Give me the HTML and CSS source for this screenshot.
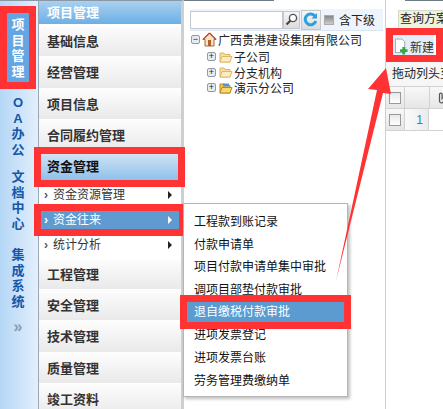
FILE: index.html
```html
<!DOCTYPE html>
<html lang="zh-CN">
  <head>
    <meta charset="UTF-8" />
    <title>项目管理</title>
    <link rel="stylesheet" href="styles.css">
  </head>
  <body>
    <div class="page">
      <!-- module rail -->
      <div class="rail">
        <div class="rail-tab rail-active">项<br>目<br>管<br>理</div>
        <div class="rail-tab rail-oa">O<br>A<br>办<br>公</div>
        <div class="rail-tab rail-doc">文<br>档<br>中<br>心</div>
        <div class="rail-tab rail-sys">集<br>成<br>系<br>统</div>
        <div class="rail-more">»</div>
      </div>

      <!-- accordion menu -->
      <div class="accordion">
        <div class="acc-head">项目管理</div>
        <div class="acc-item">基础信息</div>
        <div class="acc-item">经营管理</div>
        <div class="acc-item">项目信息</div>
        <div class="acc-item">合同履约管理</div>
        <div class="acc-item acc-active">资金管理</div>
        <div class="acc-sub"><span class="sub-mark">›</span>资金资源管理<span class="sub-arrow"></span></div>
        <div class="acc-sub acc-sub-active"><span class="sub-mark">›</span>资金往来<span class="sub-arrow"></span></div>
        <div class="acc-sub"><span class="sub-mark">›</span>统计分析<span class="sub-arrow"></span></div>
        <div class="acc-item">工程管理</div>
        <div class="acc-item">安全管理</div>
        <div class="acc-item">技术管理</div>
        <div class="acc-item">质量管理</div>
        <div class="acc-item">竣工资料</div>
      </div>

      <!-- company tree -->
      <div class="tree-panel">
        <div class="cap cap-tree"></div>
        <div class="search-bar">
          <input class="search-input" type="text" />
          <button class="search-btn">
            <svg width="13" height="13" viewBox="0 0 13 13"><circle cx="8" cy="5" r="3.6" fill="#fff" stroke="#555" stroke-width="1.4"/><path d="M5.5 7.5 1.5 11.5" stroke="#444" stroke-width="2.2"/></svg>
          </button>
          <button class="refresh-btn">
            <svg width="15" height="15" viewBox="0 0 15 15"><path d="M12 4.2A5.4 5.4 0 1 0 12.8 9" fill="none" stroke="#2b9fe0" stroke-width="3"/><path d="M8.5 6.5h5.5V1z" fill="#2b9fe0"/></svg>
          </button>
          <span class="check-box"></span>
          <span class="check-label">含下级</span>
        </div>
        <ul class="tree">
          <li class="tree-root">
            <span class="expander">−</span>
            <svg class="home" width="15" height="15" viewBox="0 0 15 15"><path d="M7.5 1 1 7.5h2V14h9V7.5h2z" fill="#f3e3c8" stroke="#a5683a"/><path d="M7.5 1 1 7.5M7.5 1 14 7.5" stroke="#c0522f" stroke-width="1.4"/><rect x="6" y="8" width="3" height="6" fill="#b5602a"/></svg>
            广西贵港建设集团有限公司
          </li>
          <li class="tree-node"><span class="expander">+</span><svg class="folder" width="14" height="12" viewBox="0 0 14 12"><path d="M1 2h4l1 1.500h5V11H1z" fill="#f6dfa0" stroke="#d9b566"/><path d="M3 5.500h10L11 11H1z" fill="#fcecc0" stroke="#dcb96b"/></svg>子公司</li>
          <li class="tree-node"><span class="expander">+</span><svg class="folder" width="14" height="12" viewBox="0 0 14 12"><path d="M1 2h4l1 1.500h5V11H1z" fill="#f6dfa0" stroke="#d9b566"/><path d="M3 5.500h10L11 11H1z" fill="#fcecc0" stroke="#dcb96b"/></svg>分支机构</li>
          <li class="tree-node"><span class="expander">+</span><svg class="folder" width="14" height="12" viewBox="0 0 14 12"><path d="M1 2h4l1 1.500h5V11H1z" fill="#f2c64e" stroke="#b58a2a"/><path d="M3 5.500h10L11 11H1z" fill="#fbd968" stroke="#b58a2a"/><path d="M4 1.500h6v3H4z" fill="#5a8fd0"/></svg>演示分公司</li>
        </ul>
      </div>

      <!-- grid side -->
      <div class="grid-panel">
        <div class="cap cap-grid"></div>
        <div class="query-tab">查询方案</div>
        <div class="toolbar">
          <button class="new-btn">
            <svg width="15" height="17" viewBox="0 0 15 17"><path d="M1.500.5h7l3 3V15h-10z" fill="#fff" stroke="#9aa6b2"/><path d="M9 9h3v2.500h2.500v3H12V17H9v-2.500H6.500v-3H9z" fill="#2fa845"/></svg>
            新建
          </button>
        </div>
        <div class="group-hint">拖动列头至此处分组</div>
        <div class="grid-row grid-head">
          <span class="cell cell-check"><i class="grid-check"></i></span>
          <span class="cell cell-num"></span>
          <span class="cell cell-clip">
            <svg width="7" height="12" viewBox="0 0 7 12"><path d="M5.500 3v6a2 2 0 0 1-4 0V2.500a1.300 1.300 0 0 1 2.600 0V8" fill="none" stroke="#555" stroke-width="1.200"/></svg>
          </span>
        </div>
        <div class="grid-row">
          <span class="cell cell-check"><i class="grid-check"></i></span>
          <span class="cell cell-num num-val">1</span>
          <span class="cell cell-clip cell-plain"></span>
        </div>
      </div>
    </div>

    <!-- popup submenu -->
    <div class="popup">
      <div class="popup-row">工程款到账记录</div>
      <div class="popup-row">付款申请单</div>
      <div class="popup-row">项目付款申请单集中审批</div>
      <div class="popup-row">调项目部垫付款审批</div>
      <div class="popup-row popup-active">退自缴税付款审批</div>
      <div class="popup-row">进项发票登记</div>
      <div class="popup-row">进项发票台账</div>
      <div class="popup-row">劳务管理费缴纳单</div>
    </div>

    <!-- annotation arrow -->
    <svg class="arrow" width="60" height="220" viewBox="0 0 60 220">
      <path d="M50 0 32 21 41 22 0 213 47 25 55 26z" fill="#f33"/>
    </svg>
  </body>
</html>
```

FILE: styles.css
```css
body {
  margin: 0;
  padding: 0;
  font-family: "Liberation Sans", "Noto Sans CJK SC", sans-serif;
  font-size: 12px;
  color: #222;
  background: #fff;
  width: 443px;
  height: 409px;
  overflow: hidden;
  position: relative;
}
.page {
  display: flex;
  height: 409px;
}

/* module rail */
.rail {
  width: 38px;
  flex: none;
  padding-top: 13px;
  box-sizing: border-box;
  background: linear-gradient(to right, #b4d7f6, #e3effc);
  border-top: 1px solid #8a97a5;
  display: flex;
  flex-direction: column;
  align-items: flex-start;
}
.rail-tab {
  width: 22px;
  margin-left: 7px;
  text-align: center;
  font-weight: bold;
  font-size: 13px;
  line-height: 15.500px;
  color: #1557a8;
}
.rail-active {
  background: #64a6e3;
  color: #fff;
  padding: 4px 0 3px;
  margin-top: -1px;
  outline: 7px solid #f33;
}
.rail-oa {
  margin-top: 13px;
}
.rail-doc {
  margin-top: 12px;
}
.rail-sys {
  margin-top: 16px;
}
.rail-more {
  width: 22px;
  margin: 9px 0 0 7px;
  text-align: center;
  font-size: 16px;
  font-weight: bold;
  color: #8a9aac;
}

/* accordion */
.accordion {
  width: 146px;
  flex: none;
  box-sizing: border-box;
  border-left: 1px solid #9aa7b4;
  border-right: 3px solid #cfcfcf;
  border-top: 1px solid #8a97a5;
  background: #fff;
}
.acc-head {
  height: 23px;
  line-height: 23px;
  padding-left: 8px;
  font-weight: bold;
  font-size: 13px;
  color: #fff;
  background: linear-gradient(to bottom, #a9d0f0, #6cb0e6);
  border-bottom: 1px solid #fff;
}
.acc-item {
  height: 31.400px;
  line-height: 31px;
  box-sizing: border-box;
  padding-left: 8px;
  font-weight: bold;
  font-size: 13px;
  color: #333;
  background: linear-gradient(to bottom, #fdfdfd, #e9e9e9);
  border-top: 1px solid #fff;
}
.acc-active {
  position: relative;
  height: 26px;
  line-height: 26px;
  margin: 3px 3px 3px 2px;
  padding-left: 6px;
  border: 0;
  color: #111;
  background: linear-gradient(to bottom, #cfe3f5, #8fc0ea);
  outline: 7px solid #f33;
}
.acc-sub {
  height: 25px;
  line-height: 24px;
  display: flex;
  align-items: center;
  padding: 0 9px 0 5px;
  color: #333;
  background: #fff;
}
.sub-mark {
  width: 9px;
  color: #555;
  font-weight: bold;
}
.sub-arrow {
  margin-left: auto;
  border-left: 4px solid #222;
  border-top: 4px solid transparent;
  border-bottom: 4px solid transparent;
}
.acc-sub-active {
  position: relative;
  height: 18px;
  margin: 3px 2px 4px 2px;
  padding: 0 7px 0 3px;
  color: #fff;
  background: #5f9bd0;
  outline: 7px solid #f33;
}
.acc-sub-active .sub-mark {
  color: #fff;
}
.acc-sub-active .sub-arrow {
  border-left-color: #fff;
}

/* tree */
.tree-panel {
  width: 201px;
  flex: none;
  box-sizing: border-box;
  padding: 0 2px 0 0;
}
.cap {
  height: 1px;
  background: #6f7c88;
}
.cap-tree {
  width: 90px;
}
.cap-grid {
  margin-left: 19px;
}
.search-bar {
  display: flex;
  align-items: center;
  height: 22px;
  box-sizing: border-box;
  margin: 8px 0 0 6px;
  padding-right: 8px;
  background: #eef4fb;
  border-bottom: 1px solid #dbe6f2;
}
.search-input {
  width: 93px;
  height: 18px;
  box-sizing: border-box;
  border: 1px solid #c4c8cc;
  background: #fff;
  padding: 0;
}
.search-btn,
.refresh-btn {
  padding: 0;
  display: flex;
  align-items: center;
  justify-content: center;
  background: linear-gradient(to bottom, #f6f6f6, #dcdcdc);
  border: 1px solid #c8c8c8;
}
.search-btn {
  width: 17px;
  height: 18px;
}
.refresh-btn {
  width: 21px;
  height: 20px;
  margin-left: 1px;
}
.check-box {
  width: 8px;
  height: 8px;
  margin-left: 3px;
  background: linear-gradient(to bottom, #888, #ccc);
  border: 1px solid #aaa;
}
.check-label {
  margin-left: 5px;
  white-space: nowrap;
}
.tree {
  list-style: none;
  margin: 0;
  padding: 0;
  font-size: 12px;
}
.tree li {
  display: flex;
  align-items: center;
  height: 15.500px;
  white-space: nowrap;
}
.tree li.tree-root {
  padding-left: 7px;
  margin-bottom: 1px;
  height: 17px;
}
.tree-node {
  padding-left: 23px;
}
.expander {
  width: 7px;
  height: 7px;
  flex: none;
  border: 1px solid #8f9ba8;
  border-radius: 2px;
  background: #e6ebf2;
  color: #223;
  font-size: 9px;
  line-height: 6px;
  text-align: center;
  margin-right: 2px;
  box-sizing: content-box;
}
.home {
  margin-right: 1px;
  flex: none;
}
.folder {
  margin: 0 1px 0 1px;
  flex: none;
}

/* grid */
.grid-panel {
  flex: 1;
  min-width: 0;
  overflow: hidden;
  border-left: 1px solid #cfcfcf;
}
.query-tab {
  width: 70px;
  height: 17px;
  margin: 9px 0 0 12px;
  padding-left: 1px;
  line-height: 17px;
  white-space: nowrap;
  background: #eef3df;
  border: 1px solid #d5d8c4;
  border-bottom: 0;
}
.toolbar {
  height: 34px;
  box-sizing: border-box;
  padding: 7px 0 0 6px;
  outline: 7px solid #f33;
  outline-offset: -7px;
}
.new-btn {
  display: flex;
  align-items: center;
  gap: 2px;
  width: 42px;
  height: 22px;
  padding: 0 0 0 2px;
  font-family: inherit;
  font-size: 12px;
  color: #333;
  background: #e4eefa;
  border: 0;
  white-space: nowrap;
}
.group-hint {
  height: 24px;
  line-height: 24px;
  padding-left: 6px;
  white-space: nowrap;
  background: #f6f6f6;
  border-bottom: 1px solid #d2d2d2;
}
.grid-row {
  display: flex;
  height: 21px;
  border-bottom: 1px solid #d2d2d2;
}
.cell {
  display: flex;
  align-items: center;
  justify-content: center;
  border-right: 1px solid #d2d2d2;
  background: linear-gradient(to bottom, #f8f8f8, #e6e6e6);
  flex: none;
}
.cell-check {
  width: 18px;
}
.cell-num {
  width: 24px;
}
.cell-clip {
  width: 13px;
  border: 0;
  justify-content: flex-start;
  padding-left: 8px;
}
.cell-plain {
  background: #fff;
}
.num-val {
  color: #2f7fc4;
  justify-content: flex-end;
  padding-right: 5px;
  box-sizing: border-box;
  background: linear-gradient(to right, #fafafa, #ececec);
}
.grid-check {
  width: 10px;
  height: 10px;
  border: 1px solid #999;
  background: linear-gradient(to bottom, #e8e8e8, #fff);
}

/* popup menu */
.popup {
  position: absolute;
  left: 183px;
  top: 203px;
  width: 165px;
  height: 194px;
  box-sizing: border-box;
  padding: 7px 3px 0 3px;
  background: #fff;
  border: 1px solid #b5b5b5;
  box-shadow: 2px 2px 3px rgba(0, 0, 0, 0.25);
  color: #111;
}
.popup-row {
  height: 22.700px;
  line-height: 22px;
  padding-left: 7px;
  white-space: nowrap;
}
.popup-active {
  height: 20px;
  line-height: 20px;
  margin-bottom: 2.700px;
  color: #fff;
  background: #5b9bd0;
  outline: 7px solid #f33;
}

/* annotation */
.arrow {
  position: absolute;
  left: 336px;
  top: 68px;
}
```
